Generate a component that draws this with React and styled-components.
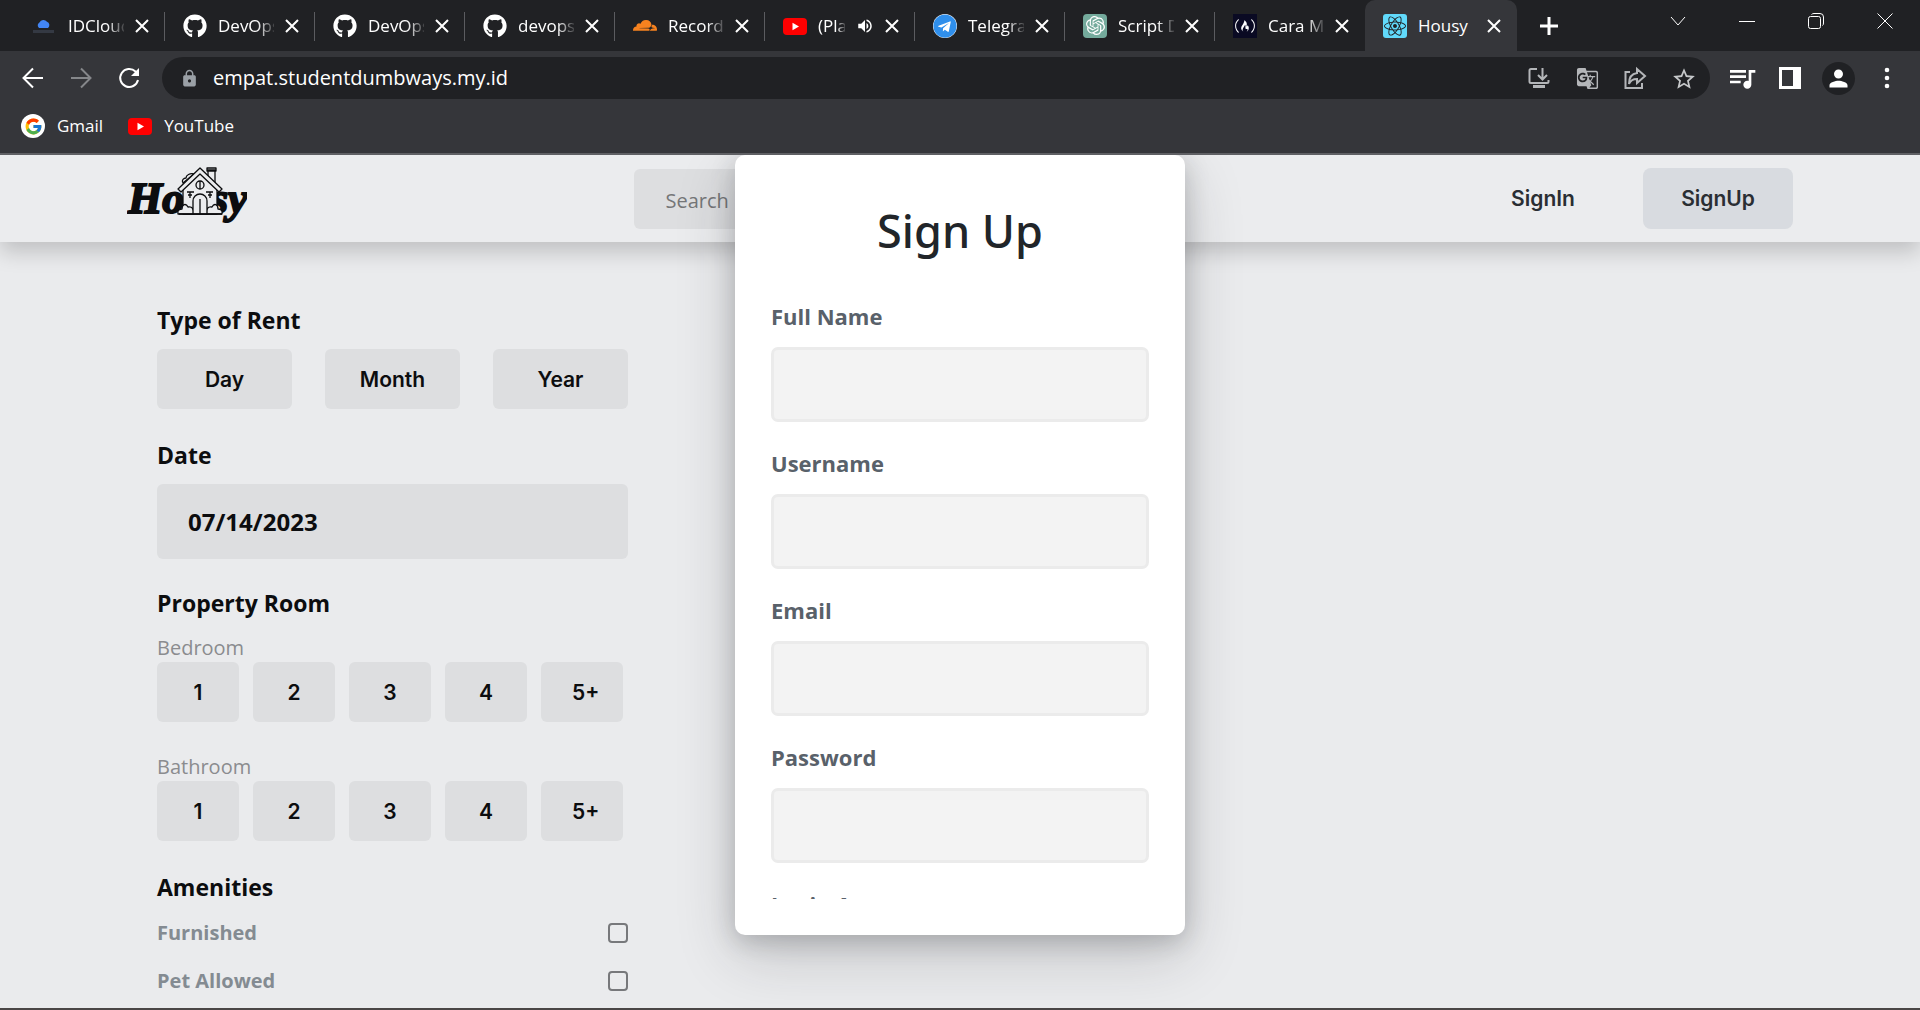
import React from "react";
import styled, { createGlobalStyle, css } from "styled-components";
import {
  FaGithub,
  FaTelegram,
  FaFreeCodeCamp,
  FaReact,
  FaCloudflare,
} from "react-icons/fa";
import { SiOpenai } from "react-icons/si";
import { FcGoogle } from "react-icons/fc";
import {
  MdLock,
  MdGTranslate,
  MdStarBorder,
  MdQueueMusic,
  MdPerson,
  MdVolumeUp,
} from "react-icons/md";

const ui = `"Open Sans", "Noto Sans", sans-serif`;
const geometric = `Inter, "Open Sans", sans-serif`;

const GlobalStyle = createGlobalStyle`
  *, *::before, *::after { box-sizing: border-box; }
  body { margin: 0; background: #eaebed; font-family: ${ui}; }
  button, input { font: inherit; color: inherit; }
  button { border: 0; padding: 0; background: none; cursor: pointer; }
  h1, h2, p { margin: 0; }
`;

const Screen = styled.div`
  display: flex;
  flex-direction: column;
  height: 100vh;
  overflow: hidden;
`;

/* ---------- Browser chrome ---------- */

const Chrome = styled.header`
  flex: none;
  background: #35363a;
  color: #fff;
  border-bottom: 2px solid #5f6064;
`;

const TabStrip = styled.div`
  display: flex;
  align-items: stretch;
  height: 51px;
  padding-left: 15px;
  background: #202124;
`;

const Tab = styled.div`
  position: relative;
  display: flex;
  align-items: center;
  gap: 11px;
  width: 150px;
  padding: 0 16px 0 18px;
  font-size: 17px;
  line-height: 24px;
  ${(p) =>
    p.$active
      ? css`
          width: 152px;
          background: #35363a;
          border-radius: 10px 10px 0 0;
        `
      : css`
          &::after {
            content: "";
            position: absolute;
            right: 0;
            top: 12px;
            bottom: 10px;
            width: 1px;
            background: ${p.$last ? "transparent" : "#5b5c60"};
          }
        `}
`;

const Favicon = styled.span`
  flex: none;
  display: grid;
  place-items: center;
  width: 24px;
  height: 24px;
  overflow: hidden;
  border-radius: ${(p) => p.$radius || 0}px;
  background: ${(p) => p.$bg || "transparent"};
  color: ${(p) => p.$color || "#fff"};
`;

const TabTitle = styled.button`
  flex: 1;
  min-width: 0;
  overflow: hidden;
  white-space: nowrap;
  text-align: left;
  ${(p) =>
    p.$fade &&
    css`
      mask-image: linear-gradient(to right, #000 70%, rgba(0, 0, 0, 0.15));
    `}
`;

const IconButton = styled.button`
  flex: none;
  display: grid;
  place-items: center;
  width: ${(p) => p.$size || 24}px;
  height: ${(p) => p.$size || 24}px;
  color: ${(p) => p.$color || "#fff"};
`;

const CloseButton = styled(IconButton)`
  width: 14px;
`;

const NewTab = styled(IconButton)`
  width: 64px;
  height: 51px;
`;

const WindowControls = styled.div`
  display: flex;
  gap: 45px;
  margin-left: auto;
  padding: 9px 23px 0 0;
`;

const Toolbar = styled.div`
  display: flex;
  align-items: center;
  padding: 6px 21px;
`;

const NavButtons = styled.div`
  display: flex;
  gap: 24px;
  padding-right: 21px;
`;

const Omnibox = styled.div`
  flex: 1;
  display: flex;
  align-items: center;
  gap: 24px;
  height: 42px;
  padding: 0 15px 0 18px;
  border-radius: 21px;
  background: #202124;
  color: #b4b6b9;
`;

const Address = styled.input`
  flex: 1;
  min-width: 0;
  margin-left: -10px;
  padding: 0;
  border: 0;
  outline: 0;
  background: none;
  color: #fff;
  font-size: 20px;
  line-height: 28px;
`;

const ToolbarActions = styled.div`
  display: flex;
  align-items: center;
  gap: 20px;
  padding-left: 16px;
`;

const Avatar = styled(IconButton)`
  border-radius: 50%;
  background: #202124;
`;

const Bookmarks = styled.nav`
  display: flex;
  gap: 25px;
  height: 48px;
  padding: 8px 21px 16px;
`;

const Bookmark = styled.a`
  display: flex;
  align-items: center;
  gap: 12px;
  height: 24px;
  padding-top: 2px;
  color: #fff;
  font-size: 17px;
  line-height: 24px;
  text-decoration: none;
`;

/* ---------- Housy page ---------- */

const Page = styled.div`
  position: relative;
  flex: 1;
  min-height: 0;
  overflow: hidden;
  background: #eaebed;
  border-bottom: 2px solid #4a4646;
`;

const Navbar = styled.nav`
  display: flex;
  align-items: center;
  justify-content: space-between;
  height: 87px;
  padding: 0 127px;
  background: #ebecee;
  box-shadow: 0 10px 20px rgba(0, 0, 0, 0.18);
`;

const LogoLink = styled.a`
  display: block;
  width: 120px;
  height: 68px;
`;

const SearchField = styled.input`
  width: 448px;
  height: 60px;
  padding: 4px 30px 0 32px;
  border: 0;
  border-radius: 6px;
  background: #dddee0;
  font-size: 20px;
  &::placeholder {
    color: #757678;
    opacity: 1;
  }
`;

const AuthButtons = styled.div`
  display: flex;
  gap: 25px;
`;

const AuthButton = styled.button`
  width: 150px;
  height: 61px;
  border-radius: 8px;
  background: ${(p) => (p.$filled ? "#d8dbe0" : "transparent")};
  color: #2a2e33;
  font-family: ${geometric};
  font-size: 21px;
  font-weight: 600;
`;

const Sidebar = styled.form`
  width: 628px;
  padding: 60px 0 0 157px;
`;

const Group = styled.section`
  display: flex;
  flex-direction: column;
  margin-bottom: 28px;
`;

const Heading = styled.h2`
  margin-bottom: 11px;
  color: #0c0d0f;
  font-size: 23px;
  font-weight: 700;
  line-height: 36px;
`;

const SubHeading = styled.p`
  color: #8b8c8f;
  font-size: 20px;
  line-height: 28px;
`;

const Options = styled.div`
  display: flex;
  gap: ${(p) => p.$gap}px;
`;

const Option = styled.button`
  width: ${(p) => p.$width}px;
  height: 60px;
  padding: 1px 31px 0;
  white-space: nowrap;
  border-radius: 6px;
  background: #dddee0;
  color: #0c0d0f;
  font-family: ${geometric};
  font-size: 21px;
  font-weight: 600;
`;

const DateField = styled.input`
  width: 100%;
  height: 75px;
  padding: 0 31px;
  border: 0;
  border-radius: 6px;
  background: #dddee0;
  color: #0c0d0f;
  font-size: 24px;
  font-weight: 700;
`;

const CheckRow = styled.label`
  display: flex;
  align-items: center;
  justify-content: space-between;
  height: 48px;
  color: #848b92;
  font-size: 20px;
  font-weight: 700;
  line-height: 28px;
`;

const CheckBox = styled.input`
  appearance: none;
  width: 20px;
  height: 20px;
  margin: 0;
  border: 2px solid #77787b;
  border-radius: 4px;
`;

const Overlay = styled.div`
  position: absolute;
  inset: 0;
  display: flex;
  justify-content: center;
  padding-bottom: 73px;
`;

const Dialog = styled.div`
  width: 450px;
  padding: 36px;
  border-radius: 10px;
  background: #fff;
  box-shadow: 0 20px 60px rgba(33, 37, 41, 0.2), 0 6px 24px rgba(33, 37, 41, 0.22);
`;

const DialogScroll = styled.form`
  height: 100%;
  overflow: hidden;
  padding-top: 4px;
`;

const DialogTitle = styled.h1`
  margin-bottom: 33px;
  color: #212529;
  font-family: "Noto Sans", sans-serif;
  font-size: 45px;
  font-weight: 500;
  line-height: 72px;
  text-align: center;
`;

const Field = styled.label`
  display: block;
  margin-bottom: 25px;
  color: #59616a;
  font-size: 22px;
  font-weight: 700;
  line-height: 32px;
`;

const FieldInput = styled.input`
  display: block;
  width: 100%;
  height: 75px;
  margin-top: 15px;
  padding: 0 20px;
  border: 3px solid #ebebeb;
  border-radius: 7px;
  outline: 0;
  background: #f3f3f3;
`;

/* ---------- Drawings ---------- */

const Stroke = ({ size = 24, width = 2, children }) => (
  <svg
    width={size}
    height={size}
    viewBox="0 0 24 24"
    fill="none"
    stroke="currentColor"
    strokeWidth={width}
    aria-hidden="true"
  >
    {children}
  </svg>
);

const Cross = () => (
  <svg width="14" height="14" viewBox="0 0 14 14" stroke="currentColor" strokeWidth="2" aria-hidden="true">
    <path d="M1 1l12 12M13 1L1 13" />
  </svg>
);

const CloudLogo = () => (
  <svg width="24" height="24" viewBox="0 0 24 24" aria-hidden="true">
    <path d="M6 14a3.400 3.400 0 0 1 .4-5.600A4.600 4.600 0 0 1 14 7.800A3.600 3.600 0 0 1 15 14z" fill="#4285f4" />
    <path d="M0 17.500h21" stroke="#343943" strokeWidth="3" />
  </svg>
);

const YoutubeMark = () => (
  <svg width="24" height="24" viewBox="0 0 24 24" aria-hidden="true">
    <rect y="4" width="24" height="17" rx="4" fill="#f00" />
    <path d="M9.500 8.800v7.400l6.500-3.700z" fill="#fff" />
  </svg>
);

const Logo = () => (
  <svg width="120" height="64" viewBox="0 0 120 64" role="img" aria-label="Housy">
    <g fill="#0c0d0f" fontFamily="'Liberation Serif', serif" fontWeight="700" fontStyle="italic" fontSize="44">
      <text x="1" y="48" stroke="#0c0d0f" strokeWidth="2">Ho</text>
      <text x="84" y="48" stroke="#0c0d0f" strokeWidth="2">sy</text>
    </g>
    <g fill="#ebecee" stroke="#0c0d0f" strokeWidth="1.300" strokeLinejoin="round">
      <path d="M56 18c-2-3 1-5 3-5 0-3 4-5 8-4z" />
      <path d="M81 17V5h7v15zM80 3h9v3h-9z" />
      <path d="M56 23L73 8l17 15v26H56z" />
      <path d="M51 24L73 3l22 21-3 3L73 9 54 27z" />
      <circle cx="73" cy="20" r="4" />
      <path d="M73 16v8" />
      <path d="M60 27h7M63 27v6M61 30h4M79 27h7M83 27v6M81 30h4" />
      <path d="M51 49c-1-4 2-5 4-5 0-5 4-6 6-2 4-1 6 2 6 7zM95 49c1-4-2-5-4-5 0-5-4-6-6-2-4-1-6 2-6 7z" />
      <path d="M66 49V36a7 7 0 0 1 14 0v13zM73 34v15" />
      <path d="M52 49h43" />
    </g>
  </svg>
);

/* ---------- Data ---------- */

const tabs = [
  { title: "IDCloudHost", icon: <CloudLogo /> },
  { title: "DevOps", icon: <FaGithub size={24} /> },
  { title: "DevOps", icon: <FaGithub size={24} /> },
  { title: "devops", icon: <FaGithub size={24} /> },
  { title: "Records", icon: <FaCloudflare size={24} />, color: "#f6821f" },
  { title: "(Play", icon: <YoutubeMark />, audible: true },
  { title: "Telegram", icon: <FaTelegram size={24} />, color: "#2f8fec", bg: "#fff", radius: 12 },
  { title: "Script D", icon: <SiOpenai size={19} />, bg: "#74aa9c", radius: 4 },
  { title: "Cara Me", icon: <FaFreeCodeCamp size={20} />, bg: "#0a0a23", last: true },
];

const fields = [
  { label: "Full Name", type: "text" },
  { label: "Username", type: "text" },
  { label: "Email", type: "email" },
  { label: "Password", type: "password" },
  { label: "Login As", type: "text" },
];

const rooms = ["1", "2", "3", "4", "5+"];

const Browser = () => (
  <Chrome>
    <TabStrip>
      {tabs.map((tab, i) => (
        <Tab key={i} $last={tab.last}>
          <Favicon $bg={tab.bg} $color={tab.color} $radius={tab.radius}>
            {tab.icon}
          </Favicon>
          <TabTitle $fade>{tab.title}</TabTitle>
          {tab.audible && <MdVolumeUp size={18} />}
          <CloseButton aria-label="Close tab">
            <Cross />
          </CloseButton>
        </Tab>
      ))}
      <Tab $active>
        <Favicon $bg="#61dafb" $color="#202124" $radius={3}>
          <FaReact size={22} />
        </Favicon>
        <TabTitle>Housy</TabTitle>
        <CloseButton aria-label="Close tab">
          <Cross />
        </CloseButton>
      </Tab>
      <NewTab aria-label="New tab">
        <Stroke width={3}>
          <path d="M12 3v18M3 12h18" />
        </Stroke>
      </NewTab>
      <WindowControls>
        <IconButton aria-label="Search tabs">
          <Stroke width={1}>
            <path d="M5 8l7 8 7-8" />
          </Stroke>
        </IconButton>
        <IconButton aria-label="Minimize">
          <Stroke width={1}>
            <path d="M4 12.500h16" />
          </Stroke>
        </IconButton>
        <IconButton aria-label="Restore">
          <Stroke width={1}>
            <rect x="4.500" y="7.500" width="12" height="12" rx="2" />
            <path d="M7.500 5.500q1-1 2.500-1h6q3.500 0 3.500 3.500v6q0 2-1 2.500" />
          </Stroke>
        </IconButton>
        <IconButton aria-label="Close window">
          <Stroke width={1}>
            <path d="M4.500 4.500l15 15M19.500 4.500l-15 15" />
          </Stroke>
        </IconButton>
      </WindowControls>
    </TabStrip>
    <Toolbar>
      <NavButtons>
        <IconButton aria-label="Back">
          <Stroke>
            <path d="M22 12H3M12 2.500L2.500 12l9.500 9.500" />
          </Stroke>
        </IconButton>
        <IconButton aria-label="Forward" $color="#85878a">
          <Stroke>
            <path d="M2 12h19M12 2.500l9.500 9.500-9.500 9.500" />
          </Stroke>
        </IconButton>
        <IconButton aria-label="Reload">
          <Stroke>
            <path d="M21 14a9 9 0 1 1-2.500-8.500l2 2.500" />
            <path d="M22 2v8h-8z" fill="currentColor" stroke="none" />
          </Stroke>
        </IconButton>
      </NavButtons>
      <Omnibox>
        <MdLock size={19} color="#9aa0a6" />
        <Address aria-label="Address" defaultValue="empat.studentdumbways.my.id" />
        <IconButton aria-label="Install" $color="#b4b6b9">
          <Stroke>
            <path d="M10 3H4q-1.500 0-1.500 1.500v11Q2.500 17 4 17h16q1.500 0 1.500-1.500V14M15.500 2v11M11 9l4.500 4.500L20 9" />
            <path d="M6 19h12v3H6z" fill="currentColor" stroke="none" />
          </Stroke>
        </IconButton>
        <IconButton aria-label="Translate" $color="#b4b6b9">
          <MdGTranslate size={23} />
        </IconButton>
        <IconButton aria-label="Share" $color="#b4b6b9">
          <Stroke>
            <path d="M7 6H2.500v16H19v-5M14 3l8 7-8 7v-4q-6 0-8 5 0-10 8-11z" />
          </Stroke>
        </IconButton>
        <IconButton aria-label="Bookmark this tab" $color="#c6c8ca">
          <MdStarBorder size={26} />
        </IconButton>
      </Omnibox>
      <ToolbarActions>
        <IconButton aria-label="Media" $size={32}>
          <MdQueueMusic size={32} />
        </IconButton>
        <IconButton aria-label="Side panel">
          <svg width="22" height="22" viewBox="0 0 22 22" aria-hidden="true">
            <path d="M0 0h22v22H0zM3 3v16h11V3z" fill="currentColor" fillRule="evenodd" />
          </svg>
        </IconButton>
        <Avatar aria-label="Profile" $size={33}>
          <MdPerson size={27} />
        </Avatar>
        <IconButton aria-label="Menu">
          <svg width="24" height="24" viewBox="0 0 24 24" fill="currentColor" aria-hidden="true">
            <circle cx="12" cy="4" r="2.300" />
            <circle cx="12" cy="12" r="2.300" />
            <circle cx="12" cy="20" r="2.300" />
          </svg>
        </IconButton>
      </ToolbarActions>
    </Toolbar>
    <Bookmarks aria-label="Bookmarks">
      <Bookmark href="#gmail">
        <Favicon $bg="#fff" $radius={12}>
          <FcGoogle size={19} />
        </Favicon>
        Gmail
      </Bookmark>
      <Bookmark href="#youtube">
        <Favicon>
          <YoutubeMark />
        </Favicon>
        YouTube
      </Bookmark>
    </Bookmarks>
  </Chrome>
);

const RoomPicker = ({ label }) => (
  <>
    <SubHeading>{label}</SubHeading>
    <Options $gap={14} role="group" aria-label={label}>
      {rooms.map((room) => (
        <Option type="button" key={room} $width={82}>
          {room}
        </Option>
      ))}
    </Options>
  </>
);

const RoomGroup = styled(Group)`
  & > ${Options} + ${SubHeading} {
    margin-top: 31px;
  }
  & > ${Heading} {
    line-height: 32px;
    margin-bottom: 15px;
  }
`;

const AmenityGroup = styled(Group)`
  & > ${Heading} {
    margin-bottom: 4px;
  }
`;

export default function App() {
  return (
    <Screen>
      <GlobalStyle />
      <Browser />
      <Page>
        <Navbar>
          <LogoLink href="#home">
            <Logo />
          </LogoLink>
          <SearchField type="search" placeholder="Search" aria-label="Search" />
          <AuthButtons>
            <AuthButton>SignIn</AuthButton>
            <AuthButton $filled>SignUp</AuthButton>
          </AuthButtons>
        </Navbar>
        <Sidebar>
          <Group>
            <Heading>Type of Rent</Heading>
            <Options $gap={33}>
              {["Day", "Month", "Year"].map((term) => (
                <Option type="button" key={term} $width={135}>
                  {term}
                </Option>
              ))}
            </Options>
          </Group>
          <Group>
            <Heading as="label" htmlFor="date">
              Date
            </Heading>
            <DateField id="date" type="text" defaultValue="07/14/2023" />
          </Group>
          <RoomGroup>
            <Heading>Property Room</Heading>
            <RoomPicker label="Bedroom" />
            <RoomPicker label="Bathroom" />
          </RoomGroup>
          <AmenityGroup>
            <Heading>Amenities</Heading>
            {["Furnished", "Pet Allowed"].map((name) => (
              <CheckRow key={name}>
                {name}
                <CheckBox type="checkbox" />
              </CheckRow>
            ))}
          </AmenityGroup>
        </Sidebar>
        <Overlay>
          <Dialog role="dialog" aria-label="Sign Up">
            <DialogScroll>
              <DialogTitle>Sign Up</DialogTitle>
              {fields.map((field) => (
                <Field key={field.label}>
                  {field.label}
                  <FieldInput type={field.type} />
                </Field>
              ))}
            </DialogScroll>
          </Dialog>
        </Overlay>
      </Page>
    </Screen>
  );
}
